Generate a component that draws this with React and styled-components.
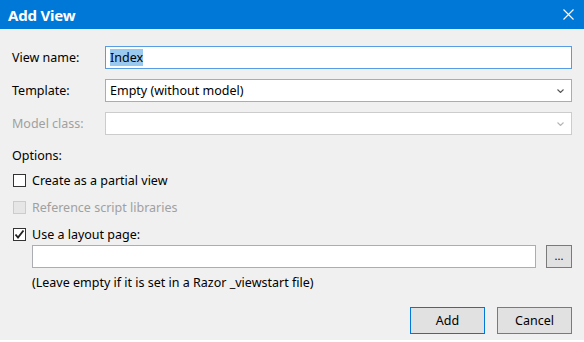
import React from "react";
import styled, { createGlobalStyle } from "styled-components";

const Global = createGlobalStyle`
  html, body { margin: 0; padding: 0; background: #ffffff; }
  body { font-family: "Noto Sans", "Open Sans", sans-serif; font-size: 12.5px; color: #000; }
  * { box-sizing: border-box; }
`;

const Dialog = styled.div`
  width: 584px;
  height: 340px;
  background: #f0f0f0;
  display: flex;
  flex-direction: column;
`;

const TitleBar = styled.div`
  height: 29px;
  background: #0078d7;
  color: #fff;
  display: flex;
  align-items: center;
  justify-content: space-between;
  padding: 0 10px 0 8px;
`;

const Title = styled.div`
  font-family: "Noto Sans", sans-serif;
  font-weight: 700;
  font-size: 15px;
  letter-spacing: -0.2px;
`;

const Body = styled.div`
  padding: 17px 12px 0 12px;
  display: flex;
  flex-direction: column;
`;

const FieldGrid = styled.div`
  display: grid;
  grid-template-columns: 93px 1fr;
  grid-auto-rows: 23px;
  row-gap: 10px;
  align-items: center;
`;

const Label = styled.div`
  color: ${(p) => (p.$disabled ? "#a0a0a0" : "#000")};
  line-height: 23px;
`;

const TextBox = styled.div`
  height: 23px;
  background: #fff;
  border: 1px solid ${(p) => (p.$focused ? "#569de5" : "#abadb3")};
  padding: 0 4px;
  display: flex;
  align-items: center;
  flex: 1;
`;

const Selected = styled.span`
  background: #99c9ef;
  color: #000;
  line-height: 17px;
`;

const Select = styled.div`
  height: 23px;
  background: #fff;
  border: 1px solid ${(p) => (p.$disabled ? "#cccccc" : "#acacac")};
  padding: 0 7px 0 4px;
  display: flex;
  align-items: center;
  justify-content: space-between;
`;

const Section = styled.div`
  height: 20px;
  margin-top: 10px;
  display: flex;
  align-items: center;
`;

const CheckRow = styled.label`
  height: 20px;
  margin-top: ${(p) => p.$mt || 7}px;
  display: flex;
  align-items: center;
  gap: 6px;
  color: ${(p) => (p.$disabled ? "#a0a0a0" : "#000")};
`;

const Box = styled.span`
  width: 13px;
  height: 13px;
  margin-left: 1px;
  border: 1px solid ${(p) => (p.$disabled ? "#cccccc" : "#333333")};
  background: ${(p) => (p.$disabled ? "#e6e6e6" : "#ffffff")};
  display: flex;
  align-items: center;
  justify-content: center;
`;

const LayoutRow = styled.div`
  display: flex;
  gap: 10px;
  padding-left: 20px;
  margin-top: 1px;
  height: 23px;
`;

const Browse = styled.div`
  width: 26px;
  height: 23px;
  background: #e1e1e1;
  border: 1px solid #7a7a7a;
  display: flex;
  align-items: center;
  justify-content: center;
  font-size: 11px;
  padding-bottom: 2px;
`;

const Note = styled.div`
  padding-left: 20px;
  height: 20px;
  margin-top: 4px;
  display: flex;
  align-items: center;
`;

const ButtonBar = styled.div`
  margin-top: 15px;
  display: flex;
  justify-content: flex-end;
  gap: 12px;
`;

const Button = styled.div`
  width: 75px;
  height: 27px;
  background: #e1e1e1;
  border: 1px solid ${(p) => (p.$default ? "#0078d7" : "#7a7a7a")};
  display: flex;
  align-items: center;
  justify-content: center;
`;

const Chevron = ({ color }) => (
  <svg width="7" height="4" viewBox="0 0 7 4">
    <polyline points="0.5,0.5 3.5,3.5 6.5,0.5" fill="none" stroke={color} strokeWidth="1.1" />
  </svg>
);

const CloseIcon = () => (
  <svg width="11" height="11" viewBox="0 0 11 11">
    <path d="M0.5 0.5 L10.5 10.5 M10.5 0.5 L0.5 10.5" stroke="#fff" strokeWidth="1.1" />
  </svg>
);

const Check = () => (
  <svg width="11" height="11" viewBox="0 0 11 11">
    <polyline points="1.5,5.5 4,8.5 9.5,1.5" fill="none" stroke="#222" strokeWidth="1.9" />
  </svg>
);

export default function App() {
  return (
    <>
      <Global />
      <Dialog>
        <TitleBar>
          <Title>Add View</Title>
          <CloseIcon />
        </TitleBar>
        <Body>
          <FieldGrid>
            <Label>View name:</Label>
            <TextBox $focused>
              <Selected>Index</Selected>
            </TextBox>
            <Label>Template:</Label>
            <Select>
              <span>Empty (without model)</span>
              <Chevron color="#555" />
            </Select>
            <Label $disabled>Model class:</Label>
            <Select $disabled>
              <span />
              <Chevron color="#b5b5b5" />
            </Select>
          </FieldGrid>
          <Section>Options:</Section>
          <CheckRow $mt={5}>
            <Box />
            Create as a partial view
          </CheckRow>
          <CheckRow $disabled>
            <Box $disabled />
            Reference script libraries
          </CheckRow>
          <CheckRow>
            <Box>
              <Check />
            </Box>
            Use a layout page:
          </CheckRow>
          <LayoutRow>
            <TextBox />
            <Browse>...</Browse>
          </LayoutRow>
          <Note>(Leave empty if it is set in a Razor _viewstart file)</Note>
          <ButtonBar>
            <Button $default>Add</Button>
            <Button>Cancel</Button>
          </ButtonBar>
        </Body>
      </Dialog>
    </>
  );
}
